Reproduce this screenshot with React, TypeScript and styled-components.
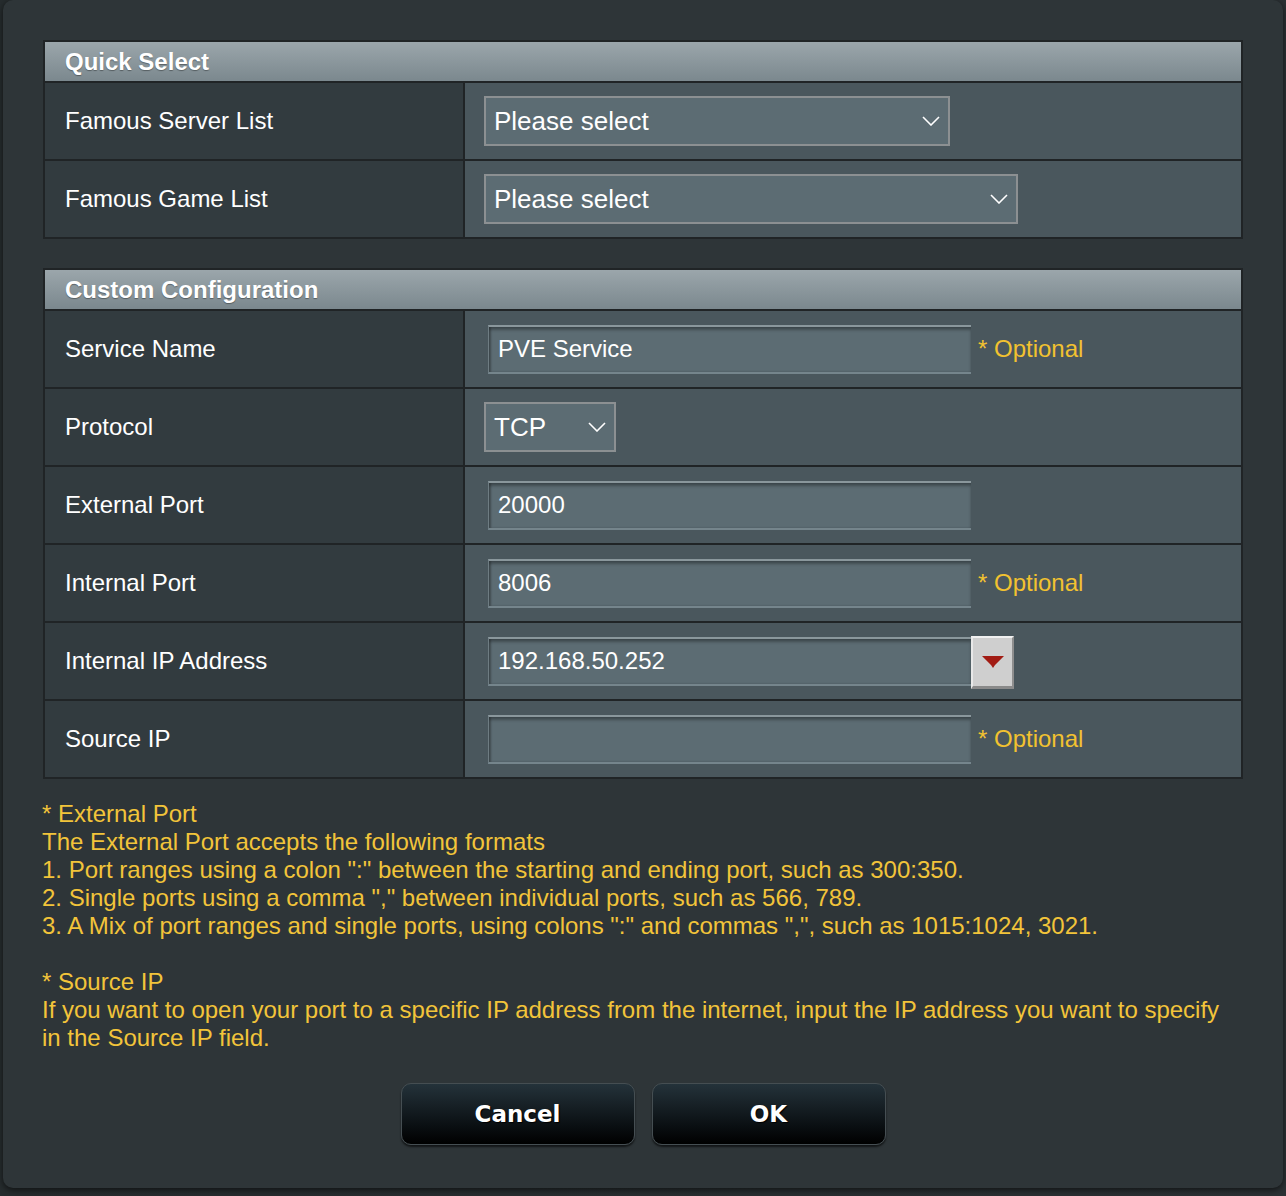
import React from "react";
import styled, { createGlobalStyle } from "styled-components";

const GlobalStyle = createGlobalStyle`
  html, body {
    margin: 0;
    padding: 0;
    background: #1f2426;
  }
  body {
    font-family: "Liberation Sans", Arial, Helvetica, sans-serif;
  }
`;

const Page = styled.div`
  width: 1286px;
  height: 1196px;
  overflow: hidden;
  padding: 0 3px;
  box-sizing: border-box;
  background: linear-gradient(90deg, #262c2e 0, #2b3134 100%);
`;

const Modal = styled.div`
  width: 1280px;
  height: 1188px;
  box-sizing: border-box;
  background: #2e3538;
  border-radius: 10px;
  box-shadow: 0 2px 6px rgba(0, 0, 0, 0.6);
  padding: 40px 40px 0 40px;
  display: flex;
  flex-direction: column;
`;

const Table = styled.table`
  width: 1200px;
  border-collapse: collapse;
  border: 2px solid #202426;
  table-layout: fixed;
  & + & {
    margin-top: 29px;
  }
`;

const LabelCol = styled.col`
  width: 420px;
`;

const HeadCell = styled.th`
  height: 39px;
  padding: 0 0 0 20px;
  text-align: left;
  font-size: 24px;
  font-weight: bold;
  color: #fff;
  text-shadow: 0 1px 1px rgba(0, 0, 0, 0.35);
  background: linear-gradient(180deg, #9ba6ab 0%, #7b888e 100%);
  border-bottom: 2px solid #202426;
`;

const Label = styled.td`
  height: 76px;
  padding: 0 0 0 20px;
  box-sizing: border-box;
  font-size: 24px;
  color: #fff;
  background: #323b3f;
  border: 2px solid #202426;
`;

const Value = styled.td<{ $inset?: number }>`
  height: 76px;
  padding: 0 0 0 ${(p) => p.$inset ?? 19}px;
  background: #4a575d;
  border: 2px solid #202426;
`;

const Inline = styled.div`
  display: flex;
  align-items: center;
`;

const SelectBox = styled.div<{ $w: number }>`
  width: ${(p) => p.$w}px;
  height: 50px;
  box-sizing: border-box;
  border: 2px solid #8c9092;
  background: #5c6c73;
  display: flex;
  align-items: center;
  justify-content: space-between;
  padding: 0 8px 0 8px;
  font-size: 26px;
  color: #fff;
`;

const TextInput = styled.div`
  width: 483px;
  height: 49px;
  flex-shrink: 0;
  box-sizing: border-box;
  background: #5c6c73;
  border-top: 2px solid #8a979c;
  border-bottom: 2px solid #75858c;
  border-left: 1px solid #6e7c82;
  box-shadow: inset 0 3px 3px rgba(0, 0, 0, 0.3), inset 2px 0 2px rgba(0, 0, 0, 0.25);
  display: flex;
  align-items: center;
  padding-left: 9px;
  font-size: 24px;
  color: #fff;
`;

const Hint = styled.span`
  margin-left: 7px;
  font-size: 24px;
  color: #f2c230;
  white-space: nowrap;
`;

const DropButton = styled.div`
  width: 43px;
  height: 53px;
  flex-shrink: 0;
  box-sizing: border-box;
  margin-top: 2px;
  background: #cfcfcf;
  border-top: 2px solid #f0f0f0;
  border-left: 2px solid #e8e8e8;
  border-right: 2px solid #8e8e8e;
  border-bottom: 3px solid #8a8a8a;
  display: flex;
  align-items: center;
  justify-content: center;
`;

const Notes = styled.div`
  margin-top: 21px;
  font-size: 24px;
  line-height: 28px;
  color: #f2c43a;
  margin-left: -1px;
`;

const Gap = styled.div`
  height: 28px;
`;

const Buttons = styled.div`
  margin-top: 31px;
  display: flex;
  justify-content: center;
  gap: 17px;
`;

const Button = styled.button`
  width: 234px;
  height: 62px;
  border-radius: 10px;
  border: 1px solid #454e52;
  background: linear-gradient(180deg, #24323a 0%, #0a0f12 70%, #000 100%);
  box-shadow: 0 2px 2px rgba(0, 0, 0, 0.6);
  color: #fff;
  font-family: "DejaVu Sans", Verdana, sans-serif;
  font-weight: bold;
  font-size: 23px;
  text-shadow: 1px 1px 1px #000;
  cursor: pointer;
`;

const Chevron = () => (
  <svg width="18" height="10" viewBox="0 0 18 10">
    <path d="M1 1 L9 9 L17 1" fill="none" stroke="#fff" strokeWidth="1.6" />
  </svg>
);

const RedArrow = () => (
  <svg width="22" height="14" viewBox="0 0 22 14">
    <path d="M0 1 L22 1 L13 10 L11 13 L9 10 Z" fill="#a21c14" />
  </svg>
);

const Cols = () => (
  <colgroup>
    <LabelCol />
    <col />
  </colgroup>
);

export default function App() {
  return (
    <Page>
      <GlobalStyle />
      <Modal>
        <Table>
          <Cols />
          <thead>
            <tr>
              <HeadCell colSpan={2}>Quick Select</HeadCell>
            </tr>
          </thead>
          <tbody>
            <tr>
              <Label>Famous Server List</Label>
              <Value>
                <SelectBox $w={466}>
                  <span>Please select</span>
                  <Chevron />
                </SelectBox>
              </Value>
            </tr>
            <tr>
              <Label>Famous Game List</Label>
              <Value>
                <SelectBox $w={534}>
                  <span>Please select</span>
                  <Chevron />
                </SelectBox>
              </Value>
            </tr>
          </tbody>
        </Table>

        <Table>
          <Cols />
          <thead>
            <tr>
              <HeadCell colSpan={2}>Custom Configuration</HeadCell>
            </tr>
          </thead>
          <tbody>
            <tr>
              <Label>Service Name</Label>
              <Value $inset={23}>
                <Inline>
                  <TextInput>PVE Service</TextInput>
                  <Hint>* Optional</Hint>
                </Inline>
              </Value>
            </tr>
            <tr>
              <Label>Protocol</Label>
              <Value>
                <SelectBox $w={132}>
                  <span>TCP</span>
                  <Chevron />
                </SelectBox>
              </Value>
            </tr>
            <tr>
              <Label>External Port</Label>
              <Value $inset={23}>
                <TextInput>20000</TextInput>
              </Value>
            </tr>
            <tr>
              <Label>Internal Port</Label>
              <Value $inset={23}>
                <Inline>
                  <TextInput>8006</TextInput>
                  <Hint>* Optional</Hint>
                </Inline>
              </Value>
            </tr>
            <tr>
              <Label>Internal IP Address</Label>
              <Value $inset={23}>
                <Inline>
                  <TextInput>192.168.50.252</TextInput>
                  <DropButton>
                    <RedArrow />
                  </DropButton>
                </Inline>
              </Value>
            </tr>
            <tr>
              <Label>Source IP</Label>
              <Value $inset={23}>
                <Inline>
                  <TextInput />
                  <Hint>* Optional</Hint>
                </Inline>
              </Value>
            </tr>
          </tbody>
        </Table>

        <Notes>
          <div>* External Port</div>
          <div>The External Port accepts the following formats</div>
          <div>1. Port ranges using a colon ":" between the starting and ending port, such as 300:350.</div>
          <div>2. Single ports using a comma "," between individual ports, such as 566, 789.</div>
          <div>3. A Mix of port ranges and single ports, using colons ":" and commas ",", such as 1015:1024, 3021.</div>
          <Gap />
          <div>* Source IP</div>
          <div>
            If you want to open your port to a specific IP address from the internet, input the IP address you want to specify
            in the Source IP field.
          </div>
        </Notes>

        <Buttons>
          <Button>Cancel</Button>
          <Button>OK</Button>
        </Buttons>
      </Modal>
    </Page>
  );
}
